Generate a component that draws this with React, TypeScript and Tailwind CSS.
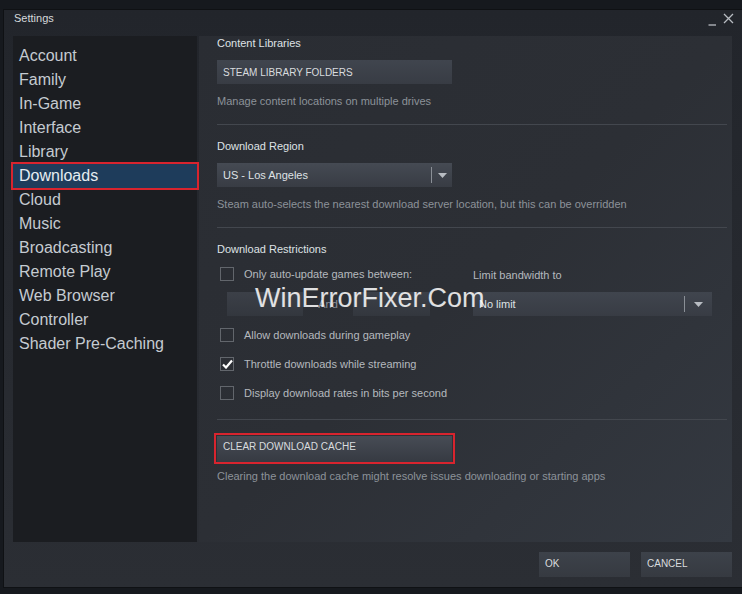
import React from "react";

const navItems = [
  "Account",
  "Family",
  "In-Game",
  "Interface",
  "Library",
  "Downloads",
  "Cloud",
  "Music",
  "Broadcasting",
  "Remote Play",
  "Web Browser",
  "Controller",
  "Shader Pre-Caching",
];

const Caret = () => (
  <svg width="9" height="5" viewBox="0 0 9 5">
    <path d="M0 0 L9 0 L4.5 5 Z" fill="#b8bcc2" />
  </svg>
);

const Checkbox = ({ checked, label }: { checked?: boolean; label: string }) => (
  <div className="flex items-center h-[14px] pl-[3px]">
    <div className="w-[14px] h-[14px] border border-[#62666c] flex items-center justify-center">
      {checked && (
        <svg width="11" height="10" viewBox="0 0 11 10">
          <path d="M1 5.5 L4 8.5 L10 1.5" stroke="#ffffff" strokeWidth="2.2" fill="none" />
        </svg>
      )}
    </div>
    <span className="ml-[10px] text-[11px] leading-[14px] text-[#b5b9be]">{label}</span>
  </div>
);

const Separator = () => <div className="h-px bg-[#43474e] mr-[5px]" />;

export default function App() {
  return (
    <div
      className="relative w-[742px] h-[594px] bg-[#16191e] pt-[9px] pl-[3px] overflow-hidden"
      style={{ fontFamily: '"Liberation Sans", Arial, sans-serif' }}
    >
      <div className="w-[739px] h-[579px] border-l border-t border-b border-[#0f1114] bg-gradient-to-b from-[#22252b] to-[#2b2e34] flex flex-col">
        {/* title bar */}
        <div className="h-[26px] flex items-start justify-between pl-[10px] pr-[8px]">
          <span className="mt-[1px] text-[11px] leading-[14px] text-[#d6d9dc]">Settings</span>
          <div className="flex items-start mt-[3px] gap-[6px]">
            <svg width="9" height="14" viewBox="0 0 9 14">
              <path d="M0.5 12 L8 12" stroke="#b8bcc2" strokeWidth="1.3" />
            </svg>
            <svg width="11" height="11" viewBox="0 0 11 11">
              <path d="M1 1 L10 10 M10 1 L1 10" stroke="#b8bcc2" strokeWidth="1.3" />
            </svg>
          </div>
        </div>

        {/* body */}
        <div className="flex pl-[9px] h-[506px]">
          <div className="w-[184px] bg-[#1b1d21] pt-[8px]">
            {navItems.map((item) => (
              <div
                key={item}
                className={`relative h-[24px] pl-[6px] flex items-center text-[16px] text-[#c5cbd1] ${
                  item === "Downloads" ? "bg-[#1e3c5b] text-[#e6ecf1]" : ""
                }`}
              >
                {item === "Downloads" && (
                  <div className="absolute -left-[2px] -top-[2px] -right-[2px] -bottom-[2px] border-[2.5px] border-[#d8242e]" />
                )}
                {item}
              </div>
            ))}
          </div>

          <div className="ml-[2px] w-[533px] bg-gradient-to-br from-[#2a2d33] via-[#2c2f35] to-[#343941] pl-[18px]">
            {/* content libraries */}
            <div className="text-[11px] leading-[14px] text-[#dfe2e5]">Content Libraries</div>
            <div className="mt-[10px] w-[235px] h-[24px] bg-gradient-to-b from-[#40454e] to-[#383c44] pl-[6px] flex items-center text-[10px] text-[#d9dcdf]">
              STEAM LIBRARY FOLDERS
            </div>
            <div className="mt-[10px] text-[11px] leading-[14px] text-[#8c9299]">
              Manage content locations on multiple drives
            </div>
            <div className="mt-[16px]">
              <Separator />
            </div>

            {/* download region */}
            <div className="mt-[14px] text-[11px] leading-[14px] text-[#dfe2e5]">Download Region</div>
            <div className="mt-[10px] w-[235px] h-[24px] bg-gradient-to-b from-[#454a53] to-[#383c44] flex items-center text-[11px] text-[#dfe2e5]">
              <span className="pl-[6px] flex-1">US - Los Angeles</span>
              <div className="w-px h-[16px] bg-[#8a8f96]" />
              <div className="w-[20px] flex justify-center">
                <Caret />
              </div>
            </div>
            <div className="mt-[10px] text-[11px] leading-[14px] text-[#8c9299]">
              Steam auto-selects the nearest download server location, but this can be overridden
            </div>
            <div className="mt-[16px]">
              <Separator />
            </div>

            {/* download restrictions */}
            <div className="mt-[14px] text-[11px] leading-[14px] text-[#dfe2e5]">Download Restrictions</div>
            <div className="mt-[11px] flex">
              <div className="w-[256px]">
                <Checkbox label="Only auto-update games between:" />
              </div>
              <span className="text-[11px] leading-[14px] text-[#b5b9be] mt-[1px]">Limit bandwidth to</span>
            </div>
            <div className="mt-[10px] flex items-center">
              <div className="ml-[10px] w-[76px] h-[24px] bg-gradient-to-b from-[#3c4048] to-[#33373e]" />
              <span className="w-[50px] text-center text-[11px] text-[#8c9299]">And</span>
              <div className="w-[77px] h-[24px] bg-gradient-to-b from-[#3c4048] to-[#33373e]" />
              <div className="ml-[43px] w-[239px] h-[24px] bg-gradient-to-b from-[#40454e] to-[#383c44] flex items-center text-[11px] text-[#dfe2e5]">
                <span className="pl-[6px] flex-1">No limit</span>
                <div className="w-px h-[16px] bg-[#8a8f96]" />
                <div className="w-[27px] flex justify-center">
                  <Caret />
                </div>
              </div>
            </div>
            <div className="mt-[12px]">
              <Checkbox label="Allow downloads during gameplay" />
            </div>
            <div className="mt-[15px]">
              <Checkbox checked label="Throttle downloads while streaming" />
            </div>
            <div className="mt-[15px]">
              <Checkbox label="Display download rates in bits per second" />
            </div>
            <div className="mt-[19px]">
              <Separator />
            </div>

            {/* clear cache */}
            <div className="relative mt-[16px] w-[235px] h-[26px] bg-gradient-to-b from-[#474c55] to-[#363a42] pl-[6px] pt-[5px] text-[10px] leading-[12px] text-[#d9dcdf]">
              <div className="absolute -left-[3px] -top-[3px] -right-[3px] -bottom-[2px] border-[2.5px] border-[#d8242e]" />
              CLEAR DOWNLOAD CACHE
            </div>
            <div className="mt-[7px] text-[11px] leading-[14px] text-[#8c9299]">
              Clearing the download cache might resolve issues downloading or starting apps
            </div>
          </div>
        </div>

        {/* footer */}
        <div className="flex justify-end gap-[11px] pr-[10px] pt-[10px]">
          <div className="w-[91px] h-[25px] bg-gradient-to-b from-[#3d424a] to-[#363a41] pl-[6px] pt-[6px] text-[10px] leading-[12px] text-[#d9dcdf]">
            OK
          </div>
          <div className="w-[91px] h-[25px] bg-gradient-to-b from-[#3d424a] to-[#363a41] pl-[6px] pt-[6px] text-[10px] leading-[12px] text-[#d9dcdf]">
            CANCEL
          </div>
        </div>
      </div>

      {/* watermark */}
      <div className="absolute left-[255px] top-[282px] text-[27px] leading-[32px] text-white/85 font-normal pointer-events-none">
        WinErrorFixer.Com
      </div>
    </div>
  );
}
